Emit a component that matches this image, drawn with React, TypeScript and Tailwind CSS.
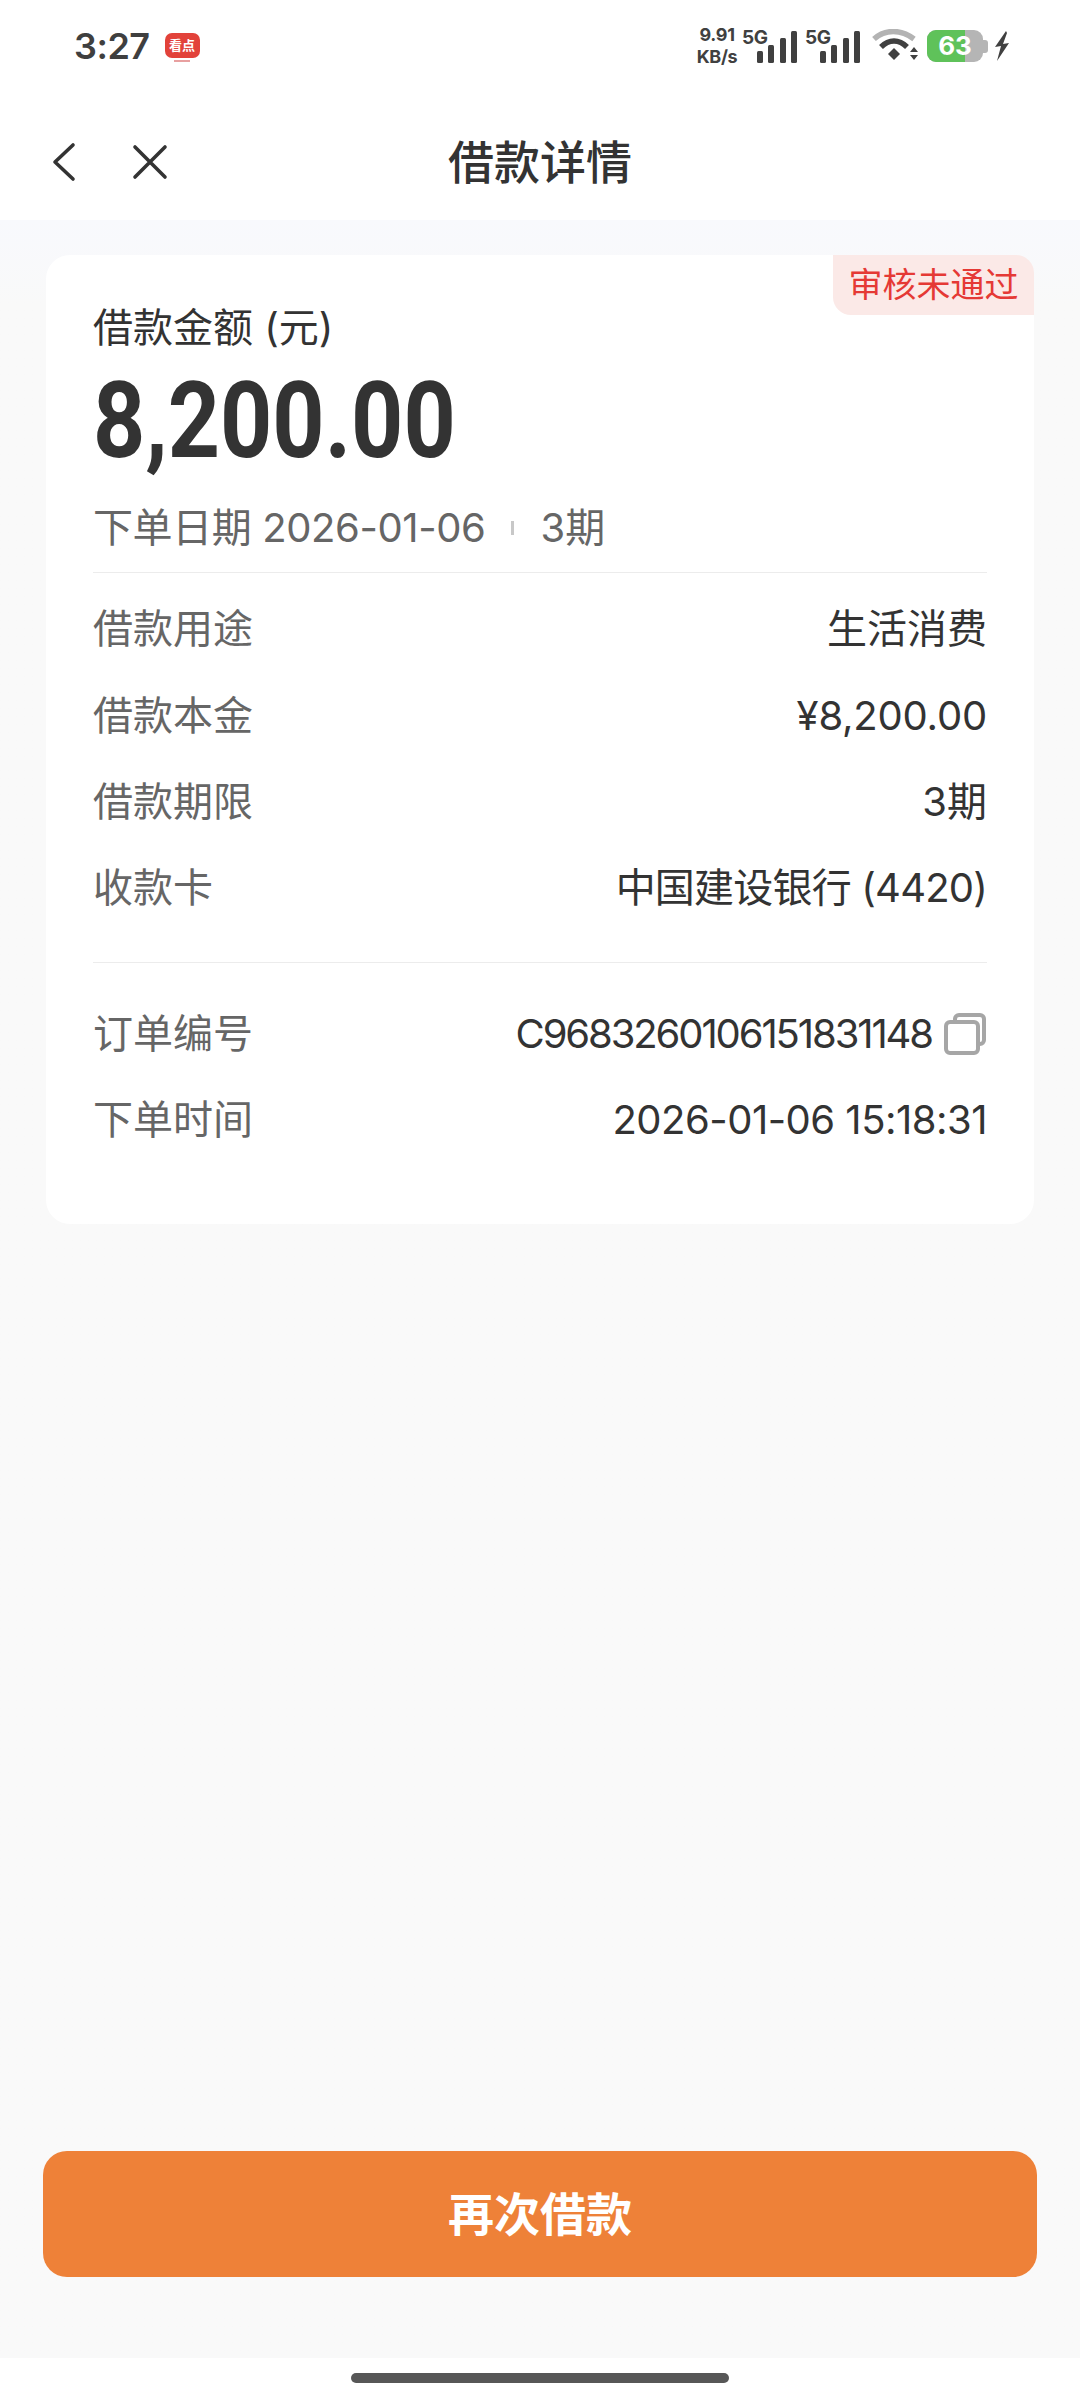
import React from "react";

const FONT = { fontFamily: '"Inter", "Noto Sans CJK SC", sans-serif' };

function Bars() {
  return (
    <svg width="40" height="32" viewBox="0 0 40 32" className="block">
      <rect x="0" y="20" width="6" height="12" rx="1.5" fill="#404040" />
      <rect x="11" y="14" width="6" height="18" rx="1.5" fill="#404040" />
      <rect x="23" y="7" width="6" height="25" rx="1.5" fill="#404040" />
      <rect x="34" y="0" width="6" height="32" rx="1.5" fill="#404040" />
    </svg>
  );
}

function FiveG() {
  return (
    <div className="relative w-[55px] h-[34px] flex justify-end items-end">
      <span className="absolute left-0 top-[-1px] text-[19px] font-bold leading-none text-[#404040] tracking-[-0.5px]">
        5G
      </span>
      <Bars />
    </div>
  );
}

function StatusBar() {
  return (
    <div className="h-[100px] flex items-start justify-between pt-[26px] pl-[74px] pr-[71px]">
      <div className="flex items-center gap-[15px] h-[40px]">
        <span className="text-[36px] font-semibold leading-none text-[#3f3f3f] tracking-[-0.5px]">3:27</span>
        <div className="flex flex-col items-center mt-[2px]">
          <div className="w-[35px] h-[25px] rounded-[7px] bg-[#e2423a] flex items-center justify-center text-white text-[13px] font-bold leading-none">
            看点
          </div>
          <div className="w-[16px] h-[2px] mt-[2px] bg-[#e8a0a0]" />
        </div>
      </div>
      <div className="flex items-center h-[36px] mt-[2px]">
        <div className="flex flex-col items-center text-[#404040] font-bold text-[18px] leading-[22px] w-[44px] tracking-[-0.3px]">
          <span>9.91</span>
          <span>KB/s</span>
        </div>
        <div className="ml-[3px]"><FiveG /></div>
        <div className="ml-[8px]"><FiveG /></div>
        <svg width="46" height="34" viewBox="0 0 46 34" className="ml-[12px]">
          <path d="M2 10 C13 0 29 0 42 10" fill="none" stroke="#b3b3b3" strokeWidth="5.5" />
          <path d="M9 18 C17 10 27 10 35 18" fill="none" stroke="#404040" strokeWidth="5.5" />
          <path d="M16 25 L22 19 L28 25 L22 31 Z" fill="#404040" />
          <path d="M38 23 L42 18 L46 23 Z M38 26 L46 26 L42 31 Z" fill="#404040" />
        </svg>
        <div className="ml-[9px] flex items-center">
          <div className="relative w-[56px] h-[32px] rounded-[9px] bg-[#b5b5b5] overflow-hidden flex items-center justify-center">
            <div className="absolute inset-y-0 left-0 w-[38px] bg-[#5fc25a]" />
            <span className="relative text-white text-[26px] font-bold leading-none">63</span>
          </div>
          <div className="w-[5px] h-[13px] rounded-r-[3px] bg-[#b5b5b5]" />
        </div>
        <svg width="14" height="30" viewBox="0 0 14 30" className="ml-[7px]">
          <path d="M11 0 L0 16 L6 15 L2 30 L14 12 L8 13 L12 2 Z" fill="#404040" />
        </svg>
      </div>
    </div>
  );
}

function NavBar() {
  return (
    <div className="h-[120px] relative flex items-center justify-center">
      <div className="absolute left-[52px] top-[42px] flex items-center gap-[56px]">
        <svg width="24" height="40" viewBox="0 0 24 40">
          <path d="M21 3 L3 20 L21 37" fill="none" stroke="#333333" strokeWidth="3.6" strokeLinecap="round" strokeLinejoin="round" />
        </svg>
        <svg width="36" height="36" viewBox="0 0 36 36">
          <path d="M3 3 L33 33 M33 3 L3 33" fill="none" stroke="#333333" strokeWidth="3.6" strokeLinecap="round" />
        </svg>
      </div>
      <span className="text-[46px] font-medium text-[#333333] leading-none mt-[4px]">借款详情</span>
    </div>
  );
}

function Row({ label, value, icon, tight }: { label: string; value: string; icon?: boolean; tight?: string }) {
  return (
    <div className="h-[86.4px] flex items-center justify-between text-[40px] leading-none">
      <span className="text-[#666666]">{label}</span>
      <div className="flex items-center gap-[12px] text-[#333333]">
        <span className={tight}>{value}</span>
        {icon && (
          <svg width="42" height="42" viewBox="0 0 42 42" className="mr-[1px]">
            <path d="M11 7 V6 A4 4 0 0 1 15 2 H36 A4 4 0 0 1 40 6 V27 A4 4 0 0 1 36 31 H34" fill="none" stroke="#a6a6a6" strokeWidth="4" />
            <rect x="2" y="9" width="32" height="31" rx="4" fill="none" stroke="#a6a6a6" strokeWidth="4" />
          </svg>
        )}
      </div>
    </div>
  );
}

function Card() {
  return (
    <div className="relative mx-[46px] mt-[35px] h-[969px] bg-white rounded-[24px] px-[47px] pt-[45px]">
      <div className="absolute right-0 top-0 w-[201px] h-[60px] bg-[#fbe9e7] rounded-tr-[18px] rounded-bl-[18px] flex items-center justify-center text-[#e53935] text-[34px] leading-none">
        审核未通过
      </div>
      <div className="h-[56px] flex items-center text-[40px] leading-none text-[#333333]">借款金额 (元)</div>
      <div className="h-[130px] flex items-center">
        <span className="inline-block origin-left scale-x-[.86] text-[106px] font-bold leading-none text-[#333333]" style={{ fontFamily: '"Roboto", sans-serif' }}>
          8,200.00
        </span>
      </div>
      <div className="mt-[11px] h-[62px] flex items-center text-[40px] leading-none text-[#666666]">
        <span className="tracking-[-0.4px]">下单日期 2026-01-06</span>
        <span className="w-[3px] h-[14px] bg-[#c8c8c8] ml-[26px] mr-[26px]" />
        <span>3期</span>
      </div>
      <div className="mt-[13px] h-[1px] bg-[#ececec]" />
      <div className="mt-[13px]">
        <Row label="借款用途" value="生活消费" />
        <Row label="借款本金" value="¥8,200.00" tight="tracking-[-0.2px]" />
        <Row label="借款期限" value="3期" />
        <Row label="收款卡" value="中国建设银行 (4420)" tight="tracking-[-0.8px]" />
      </div>
      <div className="mt-[30px] h-[1px] bg-[#ececec]" />
      <div className="mt-[28px]">
        <Row label="订单编号" value="C9683260106151831148" icon tight="tracking-[-2.1px]" />
        <Row label="下单时间" value="2026-01-06 15:18:31" tight="tracking-[-0.5px]" />
      </div>
    </div>
  );
}

export default function App() {
  return (
    <div className="w-[1080px] h-[2400px] bg-white flex flex-col overflow-hidden" style={FONT}>
      <StatusBar />
      <NavBar />
      <main className="flex-1 bg-linear-to-b from-[#f8f9fd] to-[#f9f9f9] to-[4%] flex flex-col">
        <Card />
        <div className="mt-auto mb-[81px] mx-[43px] h-[126px] rounded-[24px] bg-[#ee8138] flex items-center justify-center text-white text-[46px] font-bold leading-none">
          再次借款
        </div>
      </main>
      <div className="h-[42px] flex justify-center pt-[15px]">
        <div className="w-[378px] h-[10px] rounded-full bg-[#575757]" />
      </div>
    </div>
  );
}
